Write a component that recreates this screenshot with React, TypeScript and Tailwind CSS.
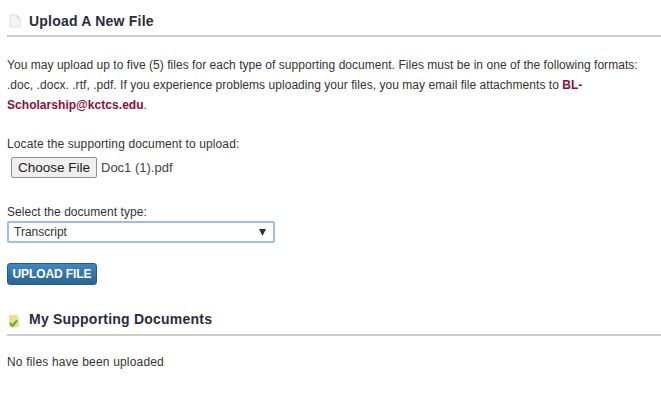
export default function App() {
  return (
    <div className="w-[661px] h-[403px] overflow-hidden bg-white pl-[7px] text-[12px] leading-[20px] text-[#333333] font-['Liberation_Sans',Arial,sans-serif]">
      <div className="flex items-center h-[37px] border-b-2 border-[#cccccc] pt-[6px]">
        <svg width="12" height="14" viewBox="0 0 12 14" className="ml-[2px] mr-[8px] mt-[1px]">
          <path d="M1 1h7l3 3v9H1z" fill="#f4f4f2" stroke="#dddddd" strokeWidth="1" />
          <path d="M8 1v3h3" fill="#e2e2e0" stroke="#d5d5d5" strokeWidth="0.5" />
        </svg>
        <h2 className="text-[14px] font-bold tracking-[0.22px] text-[#2b2b3b]">Upload A New File</h2>
      </div>
      <p className="mt-[18px] w-[640px] tracking-[0.04px]">
        You may upload up to five (5) files for each type of supporting document. Files must be in one of the following formats: .doc, .docx. .rtf, .pdf. If you experience problems uploading your files, you may email file attachments to{" "}
        <a className="font-bold text-[#8a0f3c]">BL-Scholarship@kctcs.edu</a>.
      </p>
      <div className="mt-[19px] tracking-[0.12px]">Locate the supporting document to upload:</div>
      <div className="flex items-center mt-[3px] ml-[4px] text-[13px] text-[#444444]">
        <button className="w-[86px] h-[21px] bg-[#efefef] border border-[#8f8f8f] rounded-[2px] text-[13.5px] leading-none text-[#222222]">Choose File</button>
        <span className="ml-[4px]">Doc1 (1).pdf</span>
      </div>
      <div className="mt-[24px] tracking-[0.04px]">Select the document type:</div>
      <div className="flex items-center justify-between w-[268px] h-[22px] -mt-[1px] pl-[5px] pr-[7px] bg-white border-2 border-[#9dbcec] rounded-[2px] text-[#333333]">
        <span>Transcript</span>
        <svg width="7" height="7" viewBox="0 0 7 7"><path d="M0 0h7L3.5 7z" fill="#333333" /></svg>
      </div>
      <button className="block mt-[20px] w-[90px] h-[22px] rounded-[3px] border border-[#245a8c] bg-gradient-to-b from-[#3f87c2] to-[#2a6496] text-white font-bold text-[12px] tracking-[-0.1px] leading-none">UPLOAD FILE</button>
      <div className="flex items-center h-[38px] border-b-2 border-[#cccccc] mt-[13px] pt-[6px]">
        <svg width="14" height="14" viewBox="0 0 14 14" className="ml-[0px] mr-[8px] mt-[3px]">
          <path d="M2 1h8l2 3v9H2z" fill="#f0dc8c" />
          <path d="M10 1l2 3h-2z" fill="#e6e6e0" />
          <path d="M3 9l2.5 3L10 6.5" fill="none" stroke="#5fae2e" strokeWidth="2" />
        </svg>
        <h2 className="text-[14px] font-bold tracking-[0.22px] text-[#2b2b3b]">My Supporting Documents</h2>
      </div>
      <div className="mt-[16px] tracking-[0.18px]">No files have been uploaded</div>
    </div>
  );
}
